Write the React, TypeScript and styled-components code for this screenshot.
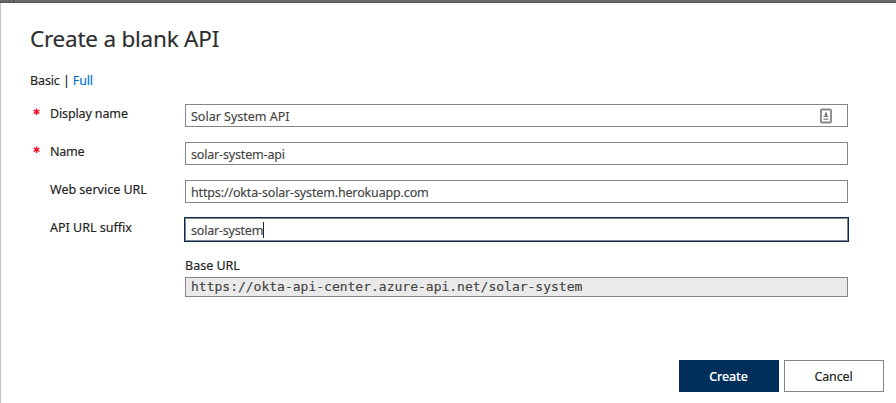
import React from 'react';
import styled, { createGlobalStyle } from 'styled-components';

const GlobalStyle = createGlobalStyle`
  * { box-sizing: border-box; }
  body { margin: 0; background: #fff; }
`;

const Page = styled.div`
  width: 896px;
  height: 403px;
  overflow: hidden;
  display: flex;
  flex-direction: column;
  font-family: 'Noto Sans', sans-serif;
  font-size: 12.5px;
  color: #222;
  -webkit-text-stroke: 0.15px currentColor;
`;

const TopStrip = styled.div`
  flex: none;
  display: flex;
  gap: 3px;
  height: 3px;
  padding-left: 9px;
  background: #696969;
  border-bottom: 1px solid #535353;
`;

const StripMark = styled.span`
  width: 1px;
  background: #4c4c4c;
`;

const Dialog = styled.main`
  flex: 1;
  display: flex;
  flex-direction: column;
  padding: 20px 12px 11px 29px;
  border-left: 1px solid #c4c4c4;
`;

const Title = styled.h1`
  margin: 0;
  height: 32px;
  font-size: 22.5px;
  line-height: 32px;
  font-weight: 400;
  letter-spacing: -0.23px;
  color: #2e2e2e;
  white-space: nowrap;
`;

const Modes = styled.nav`
  height: 18px;
  margin-top: 17px;
  line-height: 18px;
  letter-spacing: -0.12px;
  white-space: pre;
`;

const ModeLink = styled.a`
  color: #0072d0;
`;

const Form = styled.form`
  display: flex;
  flex-direction: column;
  gap: 15px;
  margin-top: 14px;
`;

const Row = styled.div`
  display: grid;
  grid-template-columns: 20px 135px 663px;
  height: 23px;
`;

const Required = styled.span`
  padding: 3px 0 0 3px;
  line-height: 10px;
`;

const Label = styled.label<{ $spacing?: number }>`
  line-height: 19px;
  letter-spacing: ${(p) => p.$spacing ?? 0}px;
  white-space: nowrap;
`;

const Field = styled.div<{ $focused?: boolean }>`
  display: flex;
  align-items: center;
  height: 23px;
  padding: 2px 15px 0 5px;
  border: 1px solid #858585;
  outline: ${(p) => (p.$focused ? '1px solid #002f5b' : 'none')};
  color: #444;
  white-space: nowrap;
`;

const Value = styled.span<{ $spacing?: number }>`
  letter-spacing: ${(p) => p.$spacing ?? 0}px;
`;

const Caret = styled.span`
  width: 1px;
  height: 16px;
  margin-top: -2px;
  background: #222;
`;

const FieldIcon = styled.svg`
  margin: -2px 0 0 auto;
`;

const BaseUrl = styled.section`
  width: 663px;
  margin: 15px 0 0 155px;
`;

const BaseLabel = styled.div`
  height: 21px;
  line-height: 19px;
`;

const BaseValue = styled.div`
  height: 20px;
  padding-left: 5px;
  border: 1px solid #858585;
  background: #eaeaea;
  color: #444;
  font: 13px/18px 'DejaVu Sans Mono', monospace;
`;

const Actions = styled.footer`
  display: flex;
  justify-content: flex-end;
  gap: 5px;
  margin-top: auto;
`;

const Button = styled.button<{ $primary?: boolean }>`
  width: 100px;
  height: 32px;
  padding: 1px 1px 0 0;
  border: 1px solid ${(p) => (p.$primary ? '#002f5b' : '#858585')};
  background: ${(p) => (p.$primary ? '#002f5b' : '#fff')};
  color: ${(p) => (p.$primary ? '#fff' : '#222')};
  font: ${(p) => (p.$primary ? 500 : 400)} 12.5px 'Noto Sans', sans-serif;
  letter-spacing: -0.15px;
  -webkit-text-stroke: 0.15px currentColor;
`;

const Star = () => (
  <Required>
    <svg width="8" height="8" viewBox="0 0 8 8" stroke="#f5001d" strokeWidth="1.4">
      <path d="M3.5 .5v6.6M.6 2.1l5.8 3.4M6.4 2.1L.6 5.5" />
    </svg>
  </Required>
);

export default function App() {
  return (
    <Page>
      <GlobalStyle />
      <TopStrip>
        <StripMark />
        <StripMark />
      </TopStrip>
      <Dialog>
        <Title>Create a blank API</Title>
        <Modes>
          Basic | <ModeLink>Full</ModeLink>
        </Modes>
        <Form>
          <Row>
            <Star />
            <Label $spacing={-0.13}>Display name</Label>
            <Field>
              <Value>Solar System API</Value>
              <FieldIcon width="12" height="16" viewBox="0 0 12 16">
                <rect x="1" y="1.5" width="10" height="13" rx="1" fill="#fff" stroke="#858585" strokeWidth="1.8" />
                <path d="M6 3.5L7.2 6v2H8.5v1h-5V8h1.3V6z" fill="#777" />
                <path d="M3.5 10.5h5v1.5h-5z" fill="#999" />
              </FieldIcon>
            </Field>
          </Row>
          <Row>
            <Star />
            <Label $spacing={-0.2}>Name</Label>
            <Field>
              <Value $spacing={-0.17}>solar-system-api</Value>
            </Field>
          </Row>
          <Row>
            <span />
            <Label>Web service URL</Label>
            <Field>
              <Value $spacing={-0.15}>https://okta-solar-system.herokuapp.com</Value>
            </Field>
          </Row>
          <Row>
            <span />
            <Label>API URL suffix</Label>
            <Field $focused>
              <Value $spacing={-0.2}>solar-system</Value>
              <Caret />
            </Field>
          </Row>
        </Form>
        <BaseUrl>
          <BaseLabel>Base URL</BaseLabel>
          <BaseValue>https://okta-api-center.azure-api.net/solar-system</BaseValue>
        </BaseUrl>
        <Actions>
          <Button type="button" $primary>Create</Button>
          <Button type="button">Cancel</Button>
        </Actions>
      </Dialog>
    </Page>
  );
}
